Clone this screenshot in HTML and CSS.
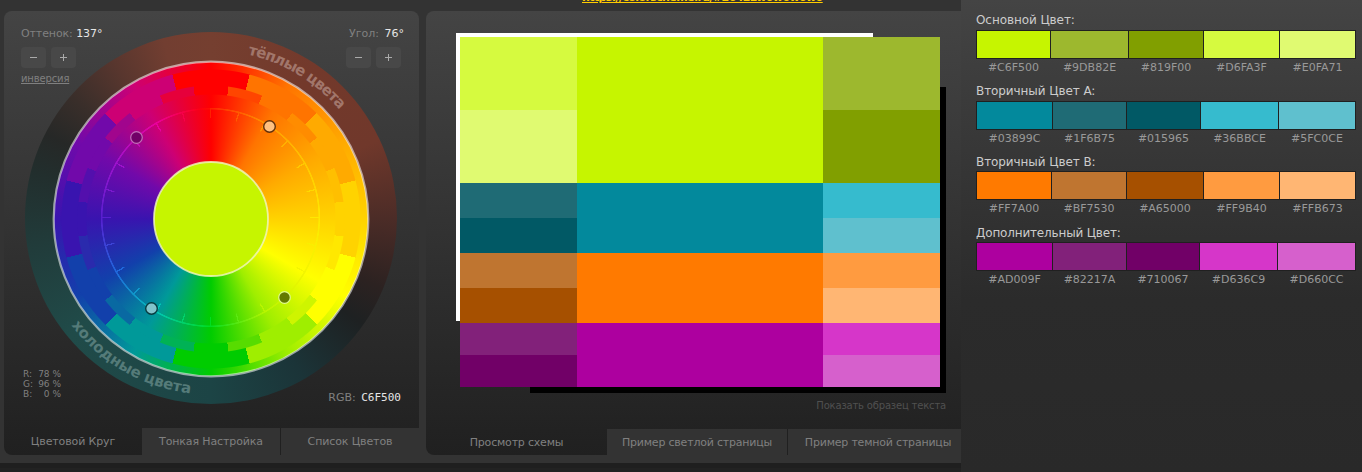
FILE: index.html
```
<!DOCTYPE html>
<html lang="ru">
<head>
<meta charset="utf-8">
<title>Цветовой Круг</title>
<link rel="stylesheet" href="styles.css">
</head>
<body>
<main class="app">
  <section class="panel panel-wheel">
    <div class="wheel-body">
      <div class="wheel">
        <div class="temperature"></div>
        <div class="hues"></div>
        <div class="steps"></div>
        <div class="half-steps"></div>
        <div class="track"></div>
        <div class="ticks"></div>
        <svg class="wheel-overlay" width="415" height="417" viewBox="4 11 415 417">
          <defs>
            <path id="warm" d="M211 50.500 A168.500 168.500 0 0 1 379.500 219"/>
            <path id="cold" d="M35.500 219 A175.500 175.500 0 0 0 211 394.500"/>
          </defs>
          <circle cx="211" cy="219" r="157.3" fill="none" stroke="#fff" stroke-opacity=".55" stroke-width="2.2"/>
          <circle cx="211" cy="219" r="57" fill="#c6f500" stroke="#eef5b8" stroke-opacity=".85" stroke-width="1.8"/>
          <text class="arc arc-warm"><textPath href="#warm" startOffset="37" textLength="109">тёплые цвета</textPath></text>
          <text class="arc arc-cold"><textPath href="#cold" startOffset="114" textLength="141">холодные цвета</textPath></text>
          <circle cx="136.5" cy="137.500" r="5.8" fill="#710067" stroke="#c070b8" stroke-width="1.2"/>
          <circle cx="269.500" cy="126.500" r="5.8" fill="#ffc080" stroke="#60300c" stroke-width="1.4"/>
          <circle cx="151.500" cy="308.500" r="5.8" fill="#81c4cc" stroke="#083c40" stroke-width="1.4"/>
          <circle cx="284.500" cy="297.500" r="5.8" fill="#637a00" stroke="#e0fa90" stroke-width="1.2"/>
        </svg>
      </div>
      <div class="controls">
        <div class="control">
          <div class="hue-label">Оттенок: <b>137°</b></div>
          <div class="buttons"><button class="minus"></button><button class="plus"></button></div>
          <a class="invert">инверсия</a>
        </div>
        <div class="control control-right">
          <div>Угол: <b>76°</b></div>
          <div class="buttons"><button class="minus"></button><button class="plus"></button></div>
        </div>
      </div>
      <div class="readout">
        <div class="percents"><span>R:</span><span>78 %</span><span>G:</span><span>96 %</span><span>B:</span><span>0 %</span></div>
        <div class="rgb">RGB: <b>C6F500</b></div>
      </div>
    </div>
    <nav class="tabs tabs-wheel"><span class="tab active">Цветовой Круг</span><span class="tab">Тонкая Настройка</span><span class="tab">Список Цветов</span></nav>
  </section>

  <section class="middle">
    <div class="share"><a>https://colorscheme.ru/#2642Lw0w0w0w0</a></div>
    <div class="panel panel-preview">
      <div class="preview-body">
        <div class="stage">
          <div class="white"></div>
          <div class="black"></div>
          <div class="scheme">
            <i class="p4"></i><i class="p1 main"></i><i class="p2"></i><i class="p5"></i><i class="p3"></i>
            <i class="a2"></i><i class="a1 main"></i><i class="a4"></i><i class="a3"></i><i class="a5"></i>
            <i class="b2"></i><i class="b1 main"></i><i class="b4"></i><i class="b3"></i><i class="b5"></i>
            <i class="c2"></i><i class="c1 main"></i><i class="c4"></i><i class="c3"></i><i class="c5"></i>
          </div>
        </div>
        <div class="sample">Показать образец текста</div>
      </div>
      <nav class="tabs tabs-preview"><span class="tab active">Просмотр схемы</span><span class="tab">Пример светлой страницы</span><span class="tab">Пример темной страницы</span></nav>
    </div>
  </section>

  <aside class="palette">
    <section class="group group-primary">
      <h2>Основной Цвет:</h2>
      <div class="swatches"><i class="p1"></i><i class="p2"></i><i class="p3"></i><i class="p4"></i><i class="p5"></i></div>
      <div class="codes"><span>#C6F500</span><span>#9DB82E</span><span>#819F00</span><span>#D6FA3F</span><span>#E0FA71</span></div>
    </section>
    <section class="group group-a">
      <h2>Вторичный Цвет A:</h2>
      <div class="swatches"><i class="a1"></i><i class="a2"></i><i class="a3"></i><i class="a4"></i><i class="a5"></i></div>
      <div class="codes"><span>#03899C</span><span>#1F6B75</span><span>#015965</span><span>#36BBCE</span><span>#5FC0CE</span></div>
    </section>
    <section class="group group-b">
      <h2>Вторичный Цвет B:</h2>
      <div class="swatches"><i class="b1"></i><i class="b2"></i><i class="b3"></i><i class="b4"></i><i class="b5"></i></div>
      <div class="codes"><span>#FF7A00</span><span>#BF7530</span><span>#A65000</span><span>#FF9B40</span><span>#FFB673</span></div>
    </section>
    <section class="group group-c">
      <h2>Дополнительный Цвет:</h2>
      <div class="swatches"><i class="c1"></i><i class="c2"></i><i class="c3"></i><i class="c4"></i><i class="c5"></i></div>
      <div class="codes"><span>#AD009F</span><span>#82217A</span><span>#710067</span><span>#D636C9</span><span>#D660CC</span></div>
    </section>
  </aside>
</main>
</body>
</html>
```
FILE: styles.css
```
* { box-sizing: border-box; }
body {
  margin: 0;
  font-family: "DejaVu Sans", sans-serif;
  font-size: 11px;
  color: #808080;
  background: #202020;
}
.app {
  display: grid;
  grid-template-columns: 426px 535px 401px;
  height: 472px;
  overflow: hidden;
  background: linear-gradient(#333 0 463px, #1f1f1f 463px 468px, #222 468px);
}
b { font-weight: normal; color: #e6e6e6; margin-left: 2px; }

.panel {
  height: 444px;
  background: linear-gradient(#444, #202020);
  display: flex;
  flex-direction: column;
}
.panel-wheel { width: 415px; margin: 11px 0 0 4px; border-radius: 8px 8px 0 8px; }
.wheel-body { height: 417px; display: grid; grid-template-rows: 1fr auto; }
.wheel { grid-area: 1 / 1 / 3 / 2; display: grid; }
.wheel > * { grid-area: 1 / 1; }
.wheel-overlay { z-index: 1; }
.controls { grid-area: 1 / 1; z-index: 2; display: flex; justify-content: space-between; align-items: flex-start; padding: 16px 15px 0 17px; }
.readout { grid-area: 2 / 1; z-index: 2; display: flex; justify-content: space-between; padding: 0 18px 24px 19px; align-items: flex-end; }

/* Wheel layers share one centre */
.temperature, .hues { border-radius: 50%; justify-self: start; }
.temperature {
  width: 372px; height: 372px;
  margin: 21px 0 0 21px;
  background: conic-gradient(#753f30 0, #73392b 35deg, #70382b 65deg, #4c2c27 90deg, #2c2221 112deg, #1e2122 125deg, #1b3438 150deg, #1c4445 180deg, #204b49 230deg, #213b3a 262deg, #222e2d 285deg, #262827 297deg, #392e2a 311deg, #58362e 328deg, #723e31 345deg, #753f30 360deg);
}
.hues {
  width: 314px; height: 314px;
  margin: 51px 0 0 50px;
  background: conic-gradient(#f00, #ff7400 30deg, #fa0 60deg, #ffd300 90deg, #ff0 120deg, #9fee00 150deg, #0c0 180deg, #099 210deg, #1240ab 240deg, #3914af 270deg, #7109aa 300deg, #cd0074 330deg, #f00 360deg);
}
.steps {
  background: conic-gradient(from -15deg at 207px 208px, #f00 0 30deg, #ff7400 0 60deg, #fa0 0 90deg, #ffd300 0 120deg, #ff0 0 150deg, #9fee00 0 180deg, #0c0 0 210deg, #099 0 240deg, #1240ab 0 270deg, #3914af 0 300deg, #7109aa 0 330deg, #cd0074 0);
  mask: radial-gradient(circle at 207px 208px, transparent 129px, #000 130px 149px, transparent 150px);
}
.half-steps {
  background: conic-gradient(from -7.5deg at 207px 208px, #f00 0 15deg, #ff4500 0 30deg, #ff7400 0 45deg, #ff8c00 0 60deg, #fa0 0 75deg, #ffbf00 0 90deg, #ffd300 0 105deg, #ffe800 0 120deg, #ff0 0 135deg, #cef500 0 150deg, #9fee00 0 165deg, #57dc00 0 180deg, #0c0 0 195deg, #00b255 0 210deg, #099 0 225deg, #0969a2 0 240deg, #1240ab 0 255deg, #2a2aad 0 270deg, #3914af 0 285deg, #530fad 0 300deg, #7109aa 0 315deg, #a1058d 0 330deg, #cd0074 0 345deg, #e6003b 0);
  mask: radial-gradient(circle at 207px 208px, transparent 124px, #000 125px 133px, transparent 134px);
}
.track, .ticks {
  background: conic-gradient(at 206.5px 206.5px, #ff2000, #ff9700 30deg, #ffc800 60deg, #ffe800 90deg, #f4f500 120deg, #b8f500 150deg, #0d2 180deg, #00c6b8 210deg, #2068dc 240deg, #581fd0 270deg, #9e12cc 300deg, #ea009e 330deg, #ff0010 355deg, #ff1000 360deg);
}
.track { mask: radial-gradient(circle at 206.5px 206.5px, transparent 107.7px, #000 108.3px 109.300px, transparent 109.9px); }
.ticks {
  mask: radial-gradient(circle at 206.5px 206.5px, transparent 99px, #000 100px 109px, transparent 110px), repeating-conic-gradient(from -.3deg at 206.5px 206.5px, #000 0 .7deg, transparent 0 15deg);
  mask-composite: intersect;
}
.arc { font: bold 15px "DejaVu Sans", sans-serif; }
.arc-warm { fill: #a1766b; }
.arc-cold { fill: #557b79; }

.control { line-height: 14px; }
.hue-label { letter-spacing: -.1px; }
.hue-label b { margin-left: 0; letter-spacing: 0; }
.control-right { text-align: right; }
.buttons { display: flex; gap: 5px; margin-top: 6px; }
.control-right .buttons { justify-content: flex-end; padding-right: 3px; }
button {
  width: 25px; height: 21px; border: 0; border-radius: 4px; padding: 0;
  background: linear-gradient(#aaa, #aaa) center / 7px 1px no-repeat, #484848;
}
.plus { background: linear-gradient(#aaa, #aaa) center / 7px 1px no-repeat, linear-gradient(#aaa, #aaa) center / 1px 7px no-repeat, #484848; }
.invert { display: block; width: 48px; font-size: 10px; letter-spacing: -.15px; margin-top: 4px; text-decoration: underline; }
.percents { display: grid; grid-template-columns: 10px 28px; padding-bottom: 5px; font-size: 9px; line-height: 10px; text-align: right; white-space: nowrap; }
.percents span:nth-child(odd) { text-align: left; }
.rgb b { font-family: "DejaVu Sans Mono", monospace; }

.tabs { display: grid; line-height: 27px; text-align: center; white-space: nowrap; }
.tab { background: #333; height: 27px; }
.tab + .tab + .tab { border-left: 1px solid #202020; }
.tab.active { background: none; }
.tabs-wheel { grid-template-columns: 138px 138px 139px; line-height: 28px; letter-spacing: -.12px; }
.tabs-preview { grid-template-columns: 181px 180px 181px; width: 535px; overflow: hidden; height: 26px; letter-spacing: -.2px; }

.middle { overflow: hidden; }
.share { height: 11px; padding-left: 156px; overflow: hidden; font-weight: bold; font-size: 11px; letter-spacing: -.6px; line-height: 11px; white-space: nowrap; }
.share a { display: block; width: 241px; margin-top: -8px; color: #fc0; text-decoration: underline; }
.panel-preview { border-radius: 8px 0 0 8px; }
.preview-body { height: 418px; padding: 22px 15px 0 30px; }
.stage { display: grid; width: 490px; height: 360px; }
.stage > * { grid-area: 1 / 1; }
.white { width: 417px; height: 288px; background: #fff; }
.black { width: 416px; height: 306px; margin: 54px 0 0 74px; background: #000; }
.scheme {
  width: 480px; height: 350px; margin: 4px 0 0 4px;
  display: grid;
  grid-template-columns: 117px 246px 117px;
  grid-template-rows: 73px 73px 35px 35px 35px 35px 32px 32px;
}
.main { grid-row: span 2; }
.sample { margin-top: 6px; text-align: right; color: #505050; font-size: 10px; letter-spacing: -.18px; line-height: 14px; }

.palette { background: linear-gradient(#444, #3b3b3b 100px, #2b2b2b 300px, #292929); padding: 11px 6px 0 15px; }
.group { height: 71px; }
.group-a { height: 70px; }
h2 { margin: 0; font-weight: normal; font-size: 12px; line-height: 19px; height: 19px; color: #ccc; letter-spacing: -.08px; }
.group-b h2, .group-c h2 { line-height: 21px; }
.group-c h2 { letter-spacing: -.17px; }
.swatches { display: grid; height: 29px; border: 1px solid #202020; gap: 1px; background: #202020; }
.codes { display: grid; line-height: 15px; padding: 1px 1px 0; gap: 1px; text-align: center; color: #999; }
.group-primary > div { grid-template-columns: 73px 77px 74px 75px 75px; }
.group-a > div { grid-template-columns: 75px 73px 73px 77px 76px; }
.group-b > div { grid-template-columns: 74px 74px 76px 75px 75px; }
.group-c > div { grid-template-columns: 75px 73px 72px 77px 77px; }

.p1 { background: #c6f500; } .p2 { background: #9db82e; } .p3 { background: #819f00; } .p4 { background: #d6fa3f; } .p5 { background: #e0fa71; }
.a1 { background: #03899c; } .a2 { background: #1f6b75; } .a3 { background: #015965; } .a4 { background: #36bbce; } .a5 { background: #5fc0ce; }
.b1 { background: #ff7a00; } .b2 { background: #bf7530; } .b3 { background: #a65000; } .b4 { background: #ff9b40; } .b5 { background: #ffb673; }
.c1 { background: #ad009f; } .c2 { background: #82217a; } .c3 { background: #710067; } .c4 { background: #d636c9; } .c5 { background: #d660cc; }
```
